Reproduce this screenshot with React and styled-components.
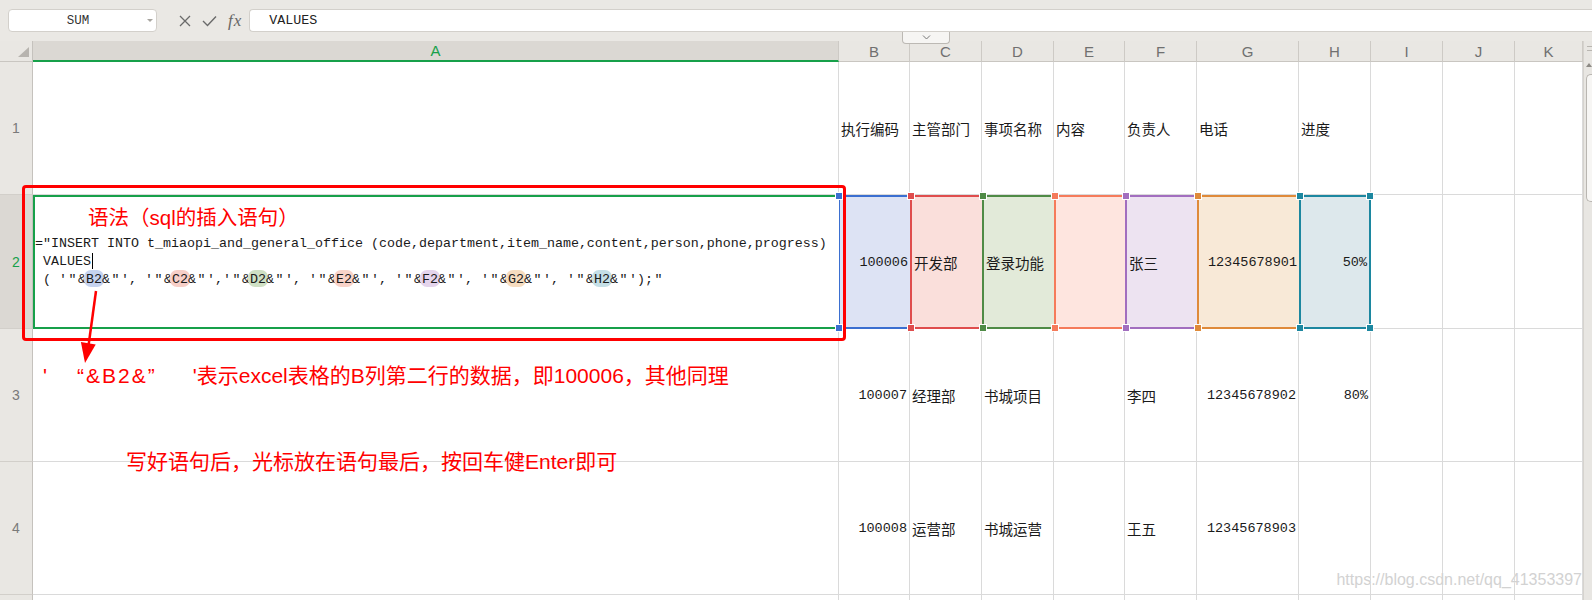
import React from "react";
import styled, { createGlobalStyle } from "styled-components";

const GlobalStyle = createGlobalStyle`
  html, body {
    margin: 0;
    padding: 0;
    background: #fff;
    overflow: hidden;
  }
  body {
    font-family: "Noto Sans CJK SC", "Liberation Sans", sans-serif;
  }
`;

const columns = [
  { key: "A", w: 806 },
  { key: "B", w: 71 },
  { key: "C", w: 72 },
  { key: "D", w: 72 },
  { key: "E", w: 71 },
  { key: "F", w: 72 },
  { key: "G", w: 102 },
  { key: "H", w: 72 },
  { key: "I", w: 72 },
  { key: "J", w: 72 },
  { key: "K", w: 68 },
];

const rows = [
  { id: 1, cells: { B: "执行编码", C: "主管部门", D: "事项名称", E: "内容", F: "负责人", G: "电话", H: "进度" } },
  { id: 2, cells: { B: "100006", C: "开发部", D: "登录功能", E: "", F: "张三", G: "12345678901", H: "50%" } },
  { id: 3, cells: { B: "100007", C: "经理部", D: "书城项目", E: "", F: "李四", G: "12345678902", H: "80%" } },
  { id: 4, cells: { B: "100008", C: "运营部", D: "书城运营", E: "", F: "王五", G: "12345678903", H: "" } },
  { id: 5, cells: {} },
];

const ranges = {
  B: { line: "#3b6fd0", fill: "#dde3f4", pill: "#c6d3ef" },
  C: { line: "#df4d4d", fill: "#fadfdb", pill: "#f7cfc8" },
  D: { line: "#4f8b46", fill: "#e2ead9", pill: "#cfe0c4" },
  E: { line: "#f57b5b", fill: "#fee5df", pill: "#f9d3c9" },
  F: { line: "#a26ebf", fill: "#ede3f1", pill: "#e4d4ec" },
  G: { line: "#df8a3a", fill: "#f8e9d7", pill: "#f6dcbf" },
  H: { line: "#1c87a0", fill: "#dde8ec", pill: "#c5dfe6" },
};

const GREEN = "#17a04a";

const Page = styled.div`
  position: relative;
  width: 1592px;
  height: 600px;
  overflow: hidden;
  background: #eae8e4;
`;

/* ---------- formula bar ---------- */

const Toolbar = styled.div`
  display: flex;
  align-items: flex-start;
  height: 41px;
  padding: 9px 0 0 8px;
  box-sizing: border-box;
`;

const NameBox = styled.div`
  width: 149px;
  height: 23px;
  box-sizing: border-box;
  display: flex;
  align-items: center;
  background: #fff;
  border: 1px solid #d3d0cb;
  border-radius: 4px;
  font: 12.5px "Liberation Mono", monospace;
  color: #333;
`;

const NameText = styled.span`
  flex: 1;
  text-align: center;
`;

const Caret = styled.span`
  width: 0;
  height: 0;
  margin-right: 3px;
  border-left: 3px solid transparent;
  border-right: 3px solid transparent;
  border-top: 3px solid #a8a5a0;
`;

const ToolIcons = styled.div`
  display: flex;
  align-items: center;
  height: 23px;
  margin-left: 22px;
  gap: 11px;
  color: #666;
`;

const Fx = styled.span`
  font: italic 17px "Liberation Serif", serif;
  letter-spacing: 1px;
  color: #666;
`;

const FormulaInput = styled.div`
  flex: 1;
  height: 23px;
  margin-left: 7px;
  box-sizing: border-box;
  display: flex;
  align-items: center;
  padding-left: 19px;
  background: #fff;
  border: 1px solid #d3d0cb;
  border-right: none;
  border-radius: 4px 0 0 4px;
  font: 13.33px "Liberation Mono", monospace;
  color: #222;
`;

/* ---------- sheet grid ---------- */

const Sheet = styled.div`
  display: grid;
  grid-template-columns: ${(p) => p.$cols};
  grid-template-rows: 21px 133px 134px 133px 133px 40px;
  background: #fff;
`;

const Corner = styled.div`
  display: flex;
  align-items: flex-end;
  justify-content: flex-end;
  padding: 0 3px 4px 0;
  box-sizing: border-box;
  background: #e9e7e3;
  border-right: 1px solid #c5c2bd;
  border-bottom: 1px solid #c9c6c1;
`;

const ColHead = styled.div`
  display: flex;
  align-items: center;
  justify-content: center;
  box-sizing: border-box;
  background: ${(p) => (p.$active ? "#dbd8d3" : "#e9e7e3")};
  color: ${(p) => (p.$active ? GREEN : "#707070")};
  border-right: 1px solid #cdcac5;
  border-bottom: ${(p) => (p.$active ? `2px solid ${GREEN}` : "1px solid #c9c6c1")};
  font: 15px "Liberation Sans", sans-serif;
`;

const RowHead = styled.div`
  display: flex;
  align-items: center;
  justify-content: center;
  box-sizing: border-box;
  background: ${(p) => (p.$active ? "#dbd8d3" : "#e9e7e3")};
  color: ${(p) => (p.$active ? GREEN : "#7a7a7a")};
  border-right: 1px solid #c5c2bd;
  border-bottom: 1px solid #d2cfca;
  font: 14px "Liberation Sans", sans-serif;
`;

const Cell = styled.div`
  display: flex;
  align-items: center;
  justify-content: ${(p) => (p.$num ? "flex-end" : "flex-start")};
  padding: 0 2px;
  box-sizing: border-box;
  min-width: 0;
  border-right: 1px solid #dadada;
  border-bottom: 1px solid #dadada;
  white-space: nowrap;
  color: #1a1a1a;
  font: ${(p) =>
    p.$num ? `13.5px "Liberation Mono", monospace` : `14.5px "Noto Sans CJK SC", sans-serif`};
`;

const RangeCell = styled(Cell)`
  position: relative;
  background: ${(p) => p.$range.fill};
  border-top: 2px solid ${(p) => p.$range.line};
  border-bottom: 2px solid ${(p) => p.$range.line};
  border-left: ${(p) => (p.$first ? 1 : 2)}px solid ${(p) => p.$range.line};
  border-right: ${(p) => (p.$last ? `2px solid ${p.$range.line}` : "none")};
`;

const Handle = styled.span`
  position: absolute;
  width: 6px;
  height: 6px;
  background: ${(p) => p.$color};
  outline: 1px solid #fff;
  ${(p) => (p.$top ? "top: -4px;" : "bottom: -4px;")}
  ${(p) => (p.$right ? "right: -4px;" : "left: -4px;")}
`;

const EditCell = styled.div`
  display: flex;
  align-items: center;
  box-sizing: border-box;
  border: 2px solid ${GREEN};
  border-right: none;
  background: #fff;
  min-width: 0;
`;

const FormulaText = styled.div`
  font: 13.33px "Liberation Mono", monospace;
  line-height: 18px;
  color: #1a1a1a;
  white-space: pre;
`;

const Q = styled.span`
  display: inline-block;
  width: 11px;
  text-align: center;
`;

const Ref = styled.span`
  padding: 2px 2px 0;
  margin: 0 -2px;
  border-radius: 7px;
  background: ${(p) => p.$bg};
`;

const TextCaret = styled.span`
  display: inline-block;
  width: 1px;
  height: 16px;
  margin-left: 1px;
  vertical-align: middle;
  background: #000;
`;

const ScrollTrack = styled.div`
  grid-column: 13;
  grid-row: 1 / -1;
  display: flex;
  flex-direction: column;
  align-items: flex-end;
  background: #e8e6e2;
  border-left: 1px solid #d6d3ce;
`;

const Grip = styled.div`
  width: 5px;
  height: 3px;
  margin-top: 5px;
  border-top: 1px solid #b9b6b1;
  border-bottom: 1px solid #b9b6b1;
`;

const ScrollArrow = styled.div`
  width: 0;
  height: 0;
  margin: 12px 0 0;
  border-left: 3px solid transparent;
  border-right: 3px solid transparent;
  border-bottom: 4px solid #8d8a85;
`;

const Thumb = styled.div`
  width: 6px;
  height: 128px;
  margin-top: 7px;
  box-sizing: border-box;
  background: #f7f6f4;
  border: 1px solid #b9b6b1;
  border-right: none;
  border-radius: 5px 0 0 5px;
`;

/* ---------- overlays ---------- */

const SheetTab = styled.div`
  position: absolute;
  left: 902px;
  top: 32px;
  width: 48px;
  height: 12px;
  box-sizing: border-box;
  display: flex;
  justify-content: center;
  align-items: center;
  background: #f6f5f3;
  border: 1px solid #bcb9b4;
  border-top: none;
  border-radius: 0 0 4px 4px;
`;

const Callout = styled.div`
  position: absolute;
  left: 22px;
  top: 185px;
  width: 824px;
  height: 156px;
  box-sizing: border-box;
  border: 3px solid #ff0000;
  border-radius: 4px;
  pointer-events: none;
`;

const RedNote = styled.div`
  position: absolute;
  left: ${(p) => p.$x}px;
  top: ${(p) => p.$y}px;
  font-family: "Liberation Sans", "Noto Sans CJK SC", sans-serif;
  font-size: ${(p) => p.$size}px;
  line-height: 24px;
  color: #ff0000;
  white-space: nowrap;
`;

const Gap = styled.span`
  display: inline-block;
  width: ${(p) => p.$w}px;
`;

const Spaced = styled.span`
  letter-spacing: 2px;
`;

const Arrow = styled.svg`
  position: absolute;
  left: 70px;
  top: 285px;
`;

const Watermark = styled.div`
  position: absolute;
  right: 10px;
  top: 571px;
  font: 16px "Liberation Sans", sans-serif;
  color: #d2d2d2;
  text-shadow: 0 0 1px #fff;
`;

const XIcon = () => (
  <svg width="12" height="12" viewBox="0 0 12 12">
    <path d="M1 1 L11 11 M11 1 L1 11" stroke="#6a6a6a" strokeWidth="1.3" fill="none" />
  </svg>
);

const CheckIcon = () => (
  <svg width="15" height="12" viewBox="0 0 15 12">
    <path d="M1 6 L5.5 10.5 L14 1.5" stroke="#6a6a6a" strokeWidth="1.4" fill="none" />
  </svg>
);

const refKeys = ["B", "C", "D", "E", "F", "G", "H"];
const seps = [", ", ",", ", ", ", ", ", ", ", "];

const ValuesLine = () => (
  <div>
    {" ( '"}
    <Q>"</Q>&amp;
    {refKeys.map((k, i) => (
      <React.Fragment key={k}>
        <Ref $bg={ranges[k].pill}>{k}2</Ref>&amp;<Q>"</Q>'
        {i < seps.length ? (
          <>
            {seps[i]}'<Q>"</Q>&amp;
          </>
        ) : (
          <>
            );<Q>"</Q>
          </>
        )}
      </React.Fragment>
    ))}
  </div>
);

const isNum = (v) => /^[\d%]+$/.test(v);

const App = () => {
  const cols = `33px ${columns.map((c) => c.w + "px").join(" ")} 9px`;

  return (
    <Page>
      <GlobalStyle />
      <Toolbar>
        <NameBox>
          <NameText>SUM</NameText>
          <Caret />
        </NameBox>
        <ToolIcons>
          <XIcon />
          <CheckIcon />
          <Fx>fx</Fx>
        </ToolIcons>
        <FormulaInput>VALUES</FormulaInput>
      </Toolbar>

      <Sheet $cols={cols}>
        <ScrollTrack>
          <Grip />
          <ScrollArrow />
          <Thumb />
        </ScrollTrack>

        <Corner>
          <svg width="11" height="10" viewBox="0 0 11 10">
            <polygon points="11,0 11,10 0,10" fill="#b7b4af" />
          </svg>
        </Corner>
        {columns.map((c) => (
          <ColHead key={c.key} $active={c.key === "A"}>
            {c.key}
          </ColHead>
        ))}

        {rows.map((r) => (
          <React.Fragment key={r.id}>
            <RowHead $active={r.id === 2}>{r.id === 5 ? "" : r.id}</RowHead>
            {columns.map((c) => {
              const v = r.cells[c.key] || "";
              if (r.id === 2 && c.key === "A") {
                return (
                  <EditCell key={c.key}>
                    <FormulaText>
                      <div>="INSERT INTO t_miaopi_and_general_office (code,department,item_name,content,person,phone,progress)</div>
                      <div>
                        {" VALUES"}
                        <TextCaret />
                      </div>
                      <ValuesLine />
                    </FormulaText>
                  </EditCell>
                );
              }
              if (r.id === 2 && ranges[c.key]) {
                const rg = ranges[c.key];
                const last = c.key === "H";
                return (
                  <RangeCell key={c.key} $range={rg} $num={isNum(v)} $first={c.key === "B"} $last={last}>
                    {v}
                    <Handle $color={rg.line} $top />
                    <Handle $color={rg.line} />
                    {last && <Handle $color={rg.line} $top $right />}
                    {last && <Handle $color={rg.line} $right />}
                  </RangeCell>
                );
              }
              return (
                <Cell key={c.key} $num={r.id !== 1 && isNum(v)}>
                  {v}
                </Cell>
              );
            })}
          </React.Fragment>
        ))}
      </Sheet>

      <SheetTab>
        <svg width="9" height="5" viewBox="0 0 9 5">
          <path d="M1 0.5 L4.5 4 L8 0.5" stroke="#777" strokeWidth="1" fill="none" />
        </svg>
      </SheetTab>

      <Callout />
      <RedNote $x={88} $y={206} $size={20.5}>
        语法（sql的插入语句）
      </RedNote>
      <Arrow width="40" height="85" viewBox="0 0 40 85">
        <line x1="26" y1="6" x2="18.6" y2="60" stroke="#ff0000" strokeWidth="2.5" />
        <polygon points="15,78 10.9,57 25.7,59.5" fill="#ff0000" />
      </Arrow>
      <RedNote $x={43} $y={364} $size={21}>
        '<Gap $w={30} />
        <Spaced>“&amp;B2&amp;”</Spaced>
        <Gap $w={36} />'表示excel表格的B列第二行的数据，即100006，其他同理
      </RedNote>
      <RedNote $x={126} $y={450} $size={21}>
        写好语句后，光标放在语句最后，按回车健Enter即可
      </RedNote>

      <Watermark>https://blog.csdn.net/qq_41353397</Watermark>
    </Page>
  );
};

export default App;
